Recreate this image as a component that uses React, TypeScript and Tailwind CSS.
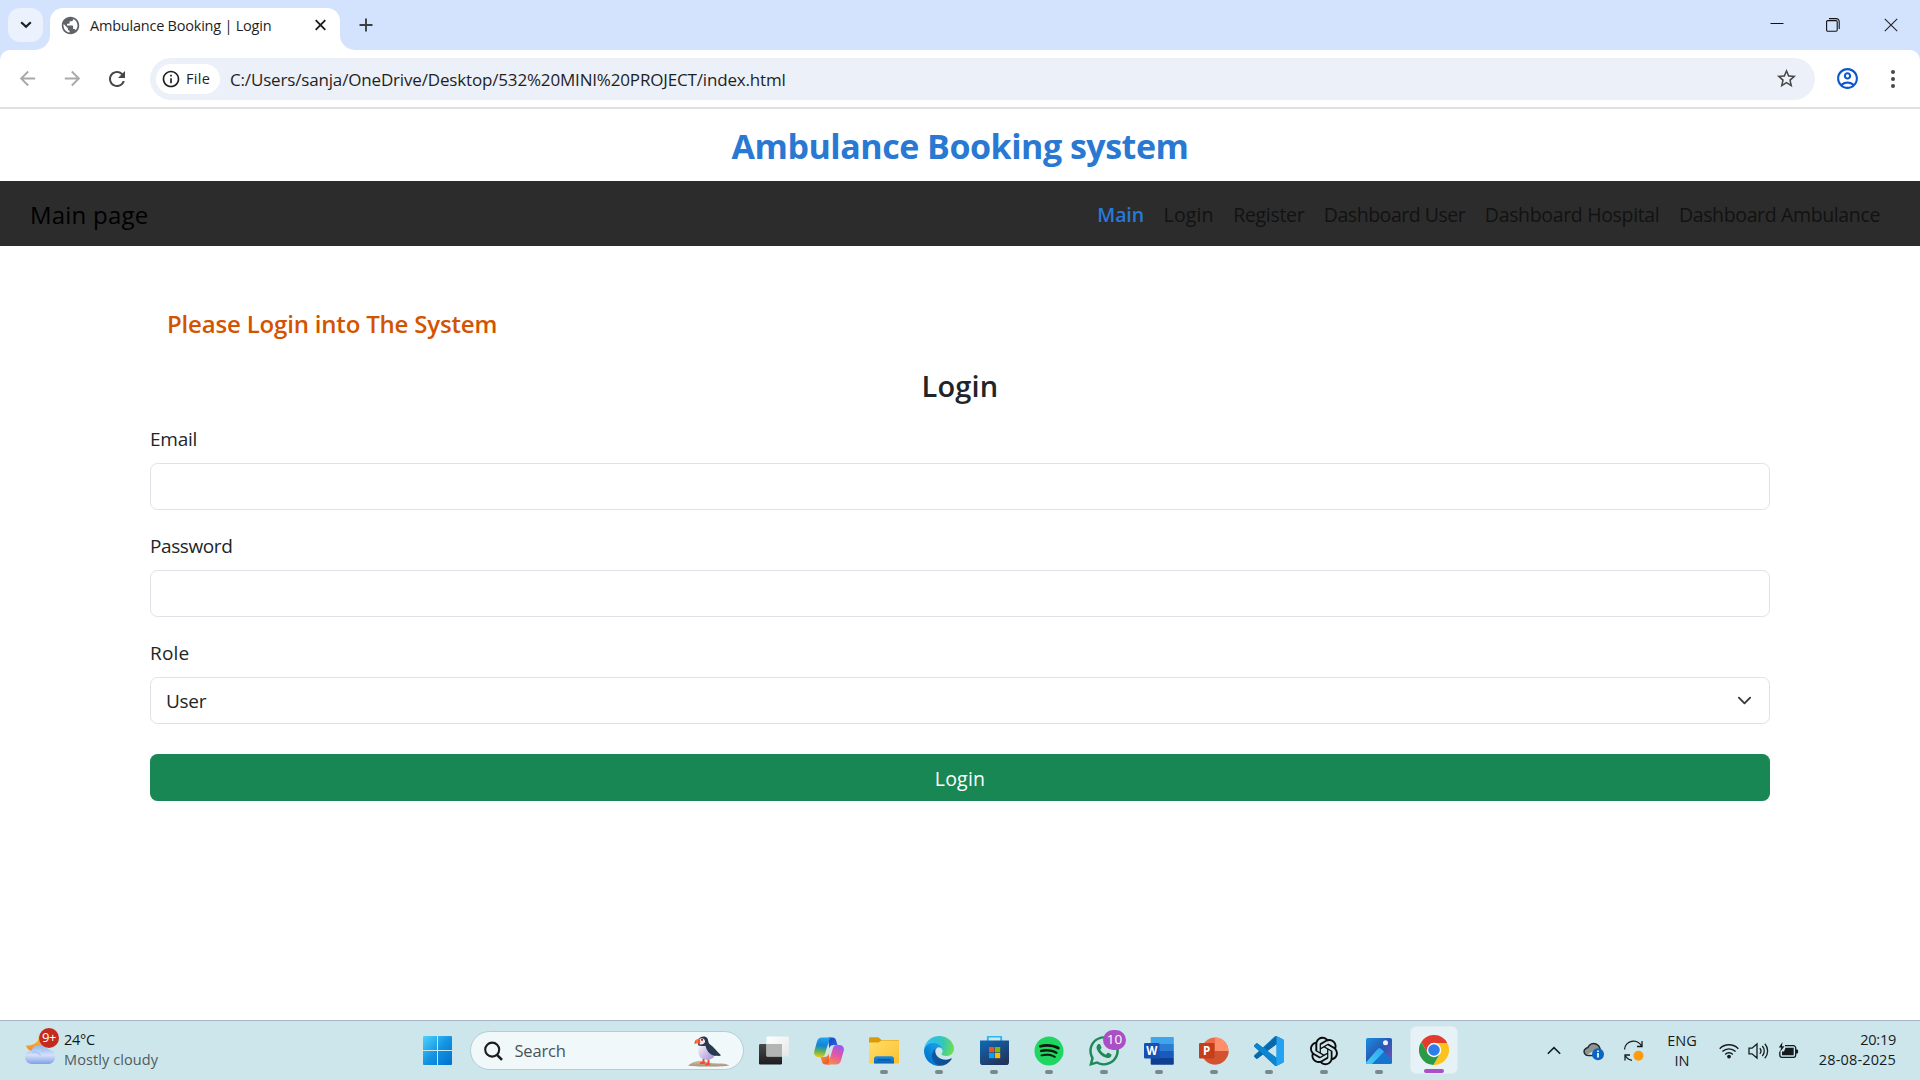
import React from "react";
import {
  MdPublic,
  MdArrowBack,
  MdArrowForward,
  MdRefresh,
  MdInfoOutline,
  MdStarBorder,
  MdOutlineAccountCircle,
} from "react-icons/md";
import { FaSpotify, FaWhatsapp } from "react-icons/fa";
import { RiOpenaiFill } from "react-icons/ri";

/* ---------- Browser frame ---------- */

function TabStrip() {
  return (
    <div className="flex h-[50px] items-start bg-[#d3e3fd] pl-2 pt-2">
      <button className="mr-[7px] flex h-[34px] w-[35px] items-center justify-center rounded-xl bg-[#ebf1fd]">
        <svg width="12" height="8" viewBox="0 0 12 8" fill="none" stroke="#1f1f1f" strokeWidth="2.2">
          <path d="M1.2 1.2 6 5.8l4.8-4.6" />
        </svg>
      </button>
      <div className="relative flex h-[42px] w-[290px] items-start rounded-t-[13px] bg-white pl-[10px] pr-[12px]">
        <svg className="absolute bottom-0 left-[-15px]" width="15" height="15" viewBox="0 0 15 15">
          <path d="M15 0v15H0A15 15 0 0 0 15 0z" fill="#fff" />
        </svg>
        <svg className="absolute bottom-0 right-[-15px]" width="15" height="15" viewBox="0 0 15 15">
          <path d="M0 0v15h15A15 15 0 0 1 0 0z" fill="#fff" />
        </svg>
        <div className="flex h-[35px] flex-1 items-center">
          <MdPublic className="-mt-px" size={21} color="#5f6368" />
          <span className="ml-[9px] text-[14.5px] tracking-[-0.221px] text-[#1f1f1f]">
            Ambulance Booking | Login
          </span>
          <svg className="ml-auto" width="15" height="15" viewBox="0 0 15 15" stroke="#1f1f1f" strokeWidth="1.9">
            <path d="m2.7 2.2 9.6 9.6M12.3 2.2 2.7 11.8" />
          </svg>
        </div>
      </div>
      <svg className="ml-[19px] mt-[10px]" width="14" height="14" viewBox="0 0 14 14" stroke="#3c4043" strokeWidth="1.9">
        <path d="M7 .5v13M.5 7h13" />
      </svg>
      <div className="ml-auto flex gap-[42px] pr-[22px] pt-[10px]">
        <svg width="14" height="14" viewBox="0 0 14 14" fill="none" stroke="#111" strokeWidth="1">
          <path d="M.5 5.5h13" />
        </svg>
        <svg width="14" height="14" viewBox="0 0 14 14" fill="none" stroke="#111" strokeWidth="1.1">
          <rect x=".6" y="2.6" width="10.6" height="10.6" rx="1.2" />
          <path d="M3 .6h7.200a3 3 0 0 1 3 3V11" />
        </svg>
        <svg className="ml-[2px]" width="14" height="14" viewBox="0 0 14 14" fill="none" stroke="#222" strokeWidth="1.1">
          <path d="m.8.8 12.400 12.400M13.200.8.8 13.200" />
        </svg>
      </div>
    </div>
  );
}

function Toolbar() {
  return (
    <div className="bg-[#d3e3fd]">
      <div className="flex h-[59px] items-center rounded-t-[10px] border-b-2 border-[#e1e1e1] bg-white pl-[16px] pr-[25px]">
        <MdArrowBack size={23} color="#a9a9a9" />
        <MdArrowForward className="ml-[22px]" size={23} color="#a9a9a9" />
        <MdRefresh className="ml-[21px]" size={24} color="#474747" />
        <div className="ml-[21px] flex h-[42px] flex-1 items-center rounded-full bg-[#ecf0f9] pl-[6px] pr-[17px]">
          <div className="flex h-[30px] w-[64px] items-center rounded-full bg-white pl-[5px]">
            <MdInfoOutline size={20} color="#1f1f1f" />
            <span className="ml-[5px] text-[14.5px] font-medium tracking-[0.3px] text-[#1f1f1f]">File</span>
          </div>
          <span className="ml-[10px] pt-[2px] text-[17px] tracking-[-0.165px] text-[#1f1f1f]">
            C:/Users/sanja/OneDrive/Desktop/532%20MINI%20PROJECT/index.html
          </span>
          <MdStarBorder className="ml-auto" size={23} color="#474747" />
        </div>
        <MdOutlineAccountCircle className="ml-[20px]" size={25} color="#0b57d0" />
        <div className="ml-[31px] flex flex-col gap-[3px]">
          <span className="h-1 w-1 rounded-full bg-[#474747]" />
          <span className="h-1 w-1 rounded-full bg-[#474747]" />
          <span className="h-1 w-1 rounded-full bg-[#474747]" />
        </div>
      </div>
    </div>
  );
}

/* ---------- Page ---------- */

function Navbar() {
  return (
    <nav className="flex h-[65px] items-center justify-between bg-[#2c2c2c] pl-[30px] pr-[40px]">
      <a className="pt-[2px] text-[24px] tracking-[0.214px] text-black">Main page</a>
      <div className="flex items-center gap-[19.5px] pt-[3px] text-[19.5px] text-[#121212]">
        <a className="font-semibold tracking-[-0.07px] text-[#2979d9]">Main</a>
        <a className="tracking-[0.145px]">Login</a>
        <a className="tracking-[-0.313px]">Register</a>
        <a className="tracking-[-0.474px]">Dashboard User</a>
        <a className="tracking-[-0.338px]">Dashboard Hospital</a>
        <a className="tracking-[-0.363px]">Dashboard Ambulance</a>
      </div>
    </nav>
  );
}

function LoginPage() {
  return (
    <main className="flex-1 bg-white text-[#212529]">
      <h1 className="flex h-[72px] items-center justify-center pt-[2px] text-[34px] font-bold tracking-[-0.49px] text-[#2979d3]">
        Ambulance Booking system
      </h1>
      <Navbar />
      <div className="mx-[150px] pt-[59px]">
        <p className="h-[38px] pl-[17px] text-[24px] font-semibold leading-[38px] tracking-[-0.18px] text-[#d35400]">
          Please Login into The System
        </p>
        <h2 className="mt-[25px] h-[36px] text-center text-[29px] font-semibold leading-[36px] tracking-[0.171px]">
          Login
        </h2>
        <form className="flex flex-col text-[19px]">
          <label className="mt-[20px] h-[30px] leading-[30px] tracking-[-0.25px]">Email</label>
          <input className="mt-[9px] h-[47px] rounded-[7.5px] border border-[#dee2e6]" />
          <label className="mt-[21px] h-[30px] leading-[30px] tracking-[-0.4px]">Password</label>
          <input type="password" className="mt-[9px] h-[47px] rounded-[7.5px] border border-[#dee2e6]" />
          <label className="mt-[21px] h-[30px] leading-[30px] tracking-[0.2px]">Role</label>
          <div className="mt-[9px] flex h-[47px] items-center justify-between rounded-[7.5px] border border-[#dee2e6] pl-[15px] pr-[17.5px] tracking-[-0.3px]">
            <span className="pt-[2px]">User</span>
            <svg width="15" height="15" viewBox="0 0 16 16" fill="none" stroke="#343a40" strokeWidth="2" strokeLinecap="round" strokeLinejoin="round">
              <path d="m2 5 6 6 6-6" />
            </svg>
          </div>
          <button type="button" className="mt-[30px] h-[47px] rounded-[7.5px] bg-[#198754] pt-[2px] text-[19.5px] tracking-[0.2px] text-white">
            Login
          </button>
        </form>
      </div>
    </main>
  );
}

/* ---------- Taskbar icons ---------- */

function WeatherIcon() {
  return (
    <svg width="36" height="40" viewBox="0 0 36 40">
      <defs>
        <linearGradient id="wx-cloud" x1="0" y1="0" x2="0" y2="1">
          <stop offset="0" stopColor="#8fb4f2" />
          <stop offset=".55" stopColor="#d3e0fa" />
          <stop offset="1" stopColor="#7f9fe6" />
        </linearGradient>
        <linearGradient id="wx-moon" x1="0" y1="0" x2="0" y2="1">
          <stop offset="0" stopColor="#fbc531" />
          <stop offset="1" stopColor="#f08a24" />
        </linearGradient>
      </defs>
      <path d="M13.500 7C15 12 10 18.500 1 17.500 3 25 15 26 20 18V8z" fill="url(#wx-moon)" />
      <path d="M7 36a6.800 6.800 0 0 1-.5-13.600A9.500 9.500 0 0 1 23.500 21.500 7.300 7.300 0 0 1 24 36z" fill="url(#wx-cloud)" />
      <path d="M7 24.500c4-1 7 .5 8.500 3M17 24c2-2.500 5-3 7-2" stroke="#a9c3f5" fill="none" strokeWidth="1.200" />
    </svg>
  );
}

function StartIcon() {
  return (
    <svg width="29" height="29" viewBox="0 0 29 29">
      <defs>
        <linearGradient id="win" x1="0" y1="0" x2="1" y2="1">
          <stop offset="0" stopColor="#4fd3fb" />
          <stop offset=".5" stopColor="#1494e2" />
          <stop offset="1" stopColor="#0070d0" />
        </linearGradient>
      </defs>
      <path d="M1 0h13v14H0V1a1 1 0 0 1 1-1zM15 0h13a1 1 0 0 1 1 1v13H15zM0 15h14v14H1a1 1 0 0 1-1-1zM15 15h14v13a1 1 0 0 1-1 1H15z" fill="url(#win)" />
    </svg>
  );
}

function PuffinIcon() {
  return (
    <svg width="42" height="32" viewBox="0 0 42 32">
      <defs>
        <linearGradient id="puf-belly" x1="0" y1="0" x2="1" y2="1">
          <stop offset="0" stopColor="#fbf4fb" />
          <stop offset="1" stopColor="#a48fd6" />
        </linearGradient>
        <linearGradient id="puf-rock" x1="0" y1="0" x2="0" y2="1">
          <stop offset="0" stopColor="#d3bfa3" />
          <stop offset="1" stopColor="#a2927f" />
        </linearGradient>
      </defs>
      <path d="M0 30.500c3-2.500 7-4.500 12-4.700 5-.3 8 2 13 2.400 6 .4 12-.4 16.500 2.300-8 1.300-33 1.500-41.500 0z" fill="url(#puf-rock)" />
      <path d="M12 10c-2 4-2.500 10 1 13 3.500 2.500 10 2.200 13-1 0-5-4-10-9-13z" fill="url(#puf-belly)" />
      <path d="M10.500 4.500C12 1.500 17 0 19.500 3.500c1 2 .5 4 2 5.500 4.500 3 7 7 11.500 11.300-1.500 1.200-4 .2-6 .7-6-1.500-8.500-6-9.500-10.300-2 .6-5.500.6-7.500-.4z" fill="#28384d" />
      <path d="M11 4.500c2-2 5.500-1.500 6 1.500.3 2.500-2.500 4-5.500 3.500z" fill="#f1e8ee" />
      <path d="M11 3.500c-3 .5-4.800 2.500-4.500 5.500 2-1 4-.8 5.300 0 .8-2 .5-4-.8-5.500z" fill="#f0502f" />
      <path d="M9.500 4.200c-.8 1.600-.7 3 .1 4.200" stroke="#f9b33c" strokeWidth="1" fill="none" />
      <circle cx="14" cy="4.800" r="1.100" fill="#c9302c" />
      <circle cx="14" cy="4.800" r=".5" fill="#111" />
      <path d="M15.500 24v3.500l-3.500.8M15.500 27.500l1.500 1M20.500 24.500v4l-3 1.500M20.500 28.500l1 1.500" stroke="#f0502f" strokeWidth="2" fill="none" />
    </svg>
  );
}

function TaskViewIcon() {
  return (
    <svg width="30" height="29" viewBox="0 0 30 29">
      <defs>
        <linearGradient id="tv-d" x1="0" y1="0" x2="0" y2="1">
          <stop offset="0" stopColor="#4a4a4a" />
          <stop offset="1" stopColor="#1d1d1d" />
        </linearGradient>
        <linearGradient id="tv-l" x1="0" y1="0" x2="1" y2="1">
          <stop offset="0" stopColor="#fff" />
          <stop offset="1" stopColor="#e4e6e7" />
        </linearGradient>
      </defs>
      <rect x="0" y="8" width="23" height="20.500" rx="1.200" fill="url(#tv-d)" />
      <rect x="7.500" y=".5" width="22.500" height="20" rx="1.200" fill="url(#tv-l)" />
      <path d="M7.500 8H23v12.500H7.500z" fill="#b3b5b5" />
    </svg>
  );
}

function CopilotIcon() {
  return (
    <svg width="30" height="28" viewBox="0 0 30 28">
      <defs>
        <linearGradient id="cp-a" x1=".4" y1="0" x2=".3" y2="1">
          <stop offset="0" stopColor="#1fa4ee" />
          <stop offset=".4" stopColor="#1683d8" />
          <stop offset=".7" stopColor="#58b35a" />
          <stop offset="1" stopColor="#f0c419" />
        </linearGradient>
        <linearGradient id="cp-b" x1=".7" y1="0" x2=".3" y2="1">
          <stop offset="0" stopColor="#9a5bf0" />
          <stop offset=".45" stopColor="#e055a8" />
          <stop offset="1" stopColor="#fb8a4a" />
        </linearGradient>
        <linearGradient id="cp-c" x1="0" y1="0" x2="1" y2="1">
          <stop offset="0" stopColor="#1b3fc4" />
          <stop offset="1" stopColor="#2371e8" />
        </linearGradient>
        <linearGradient id="cp-d" x1="0" y1="0" x2="1" y2="1">
          <stop offset="0" stopColor="#f6a623" />
          <stop offset="1" stopColor="#ee4338" />
        </linearGradient>
      </defs>
      <path d="M14 .5h4.500c2 0 3 1 3.500 2.800L23.500 8H20c-3 0-4 1-4.800 3.500z" fill="url(#cp-c)" />
      <path d="M16 27.500h-4.500c-2 0-3-1-3.500-2.800L6.500 20H10c3 0 4-1 4.800-3.500z" fill="url(#cp-d)" />
      <path d="M8 .5h10c-1.800.3-2.500 1.500-3 3.200L11 17c-.6 2-1.800 3-3.800 3H4.500C1.500 20-.5 17.800.2 14.500L3 4.500C3.700 2 5.500.5 8 .5z" fill="url(#cp-a)" />
      <path d="M22 27.500H12c1.800-.3 2.500-1.500 3-3.200L19 11c.6-2 1.800-3 3.800-3h2.700c3 0 5 2.200 4.300 5.500L27 23.500c-.7 2.500-2.500 4-5 4z" fill="url(#cp-b)" />
    </svg>
  );
}

function FolderIcon() {
  return (
    <svg width="30" height="27" viewBox="0 0 30 27">
      <defs>
        <linearGradient id="fd" x1="0" y1="0" x2="1" y2="1">
          <stop offset="0" stopColor="#ffdf6b" />
          <stop offset="1" stopColor="#fdbf2d" />
        </linearGradient>
        <linearGradient id="fd-b" x1="0" y1="0" x2="0" y2="1">
          <stop offset="0" stopColor="#1b8ee0" />
          <stop offset="1" stopColor="#0b63b8" />
        </linearGradient>
      </defs>
      <path d="M0 1.500A1.300 1.300 0 0 1 1.300.2h8L12.500 3H29a1 1 0 0 1 1 1v6H0z" fill="#dd9a08" />
      <path d="M0 5.500h9.500L12.500 3.500H29a1 1 0 0 1 1 1v21a1 1 0 0 1-1 1H1a1 1 0 0 1-1-1z" fill="url(#fd)" />
      <path d="M5 26.500V22a2.800 2.800 0 0 1 2.800-2.800h14.400A2.800 2.800 0 0 1 25 22v4.500z" fill="url(#fd-b)" />
      <path d="M8.500 22.800h13" stroke="#0a4c93" strokeWidth="1.200" />
    </svg>
  );
}

function EdgeIcon() {
  return (
    <svg width="30" height="30" viewBox="0 0 256 256">
      <defs>
        <linearGradient id="ed-a" x1="63" y1="177" x2="241" y2="177" gradientUnits="userSpaceOnUse">
          <stop offset="0" stopColor="#0c59a4" />
          <stop offset="1" stopColor="#114a8b" />
        </linearGradient>
        <linearGradient id="ed-b" x1="157" y1="104" x2="46" y2="225" gradientUnits="userSpaceOnUse">
          <stop offset="0" stopColor="#1b9de2" />
          <stop offset=".3" stopColor="#1595df" />
          <stop offset=".7" stopColor="#0680d7" />
          <stop offset="1" stopColor="#0078d4" />
        </linearGradient>
        <radialGradient id="ed-c" cx="30" cy="65" r="235" gradientUnits="userSpaceOnUse">
          <stop offset="0" stopColor="#35c1f1" />
          <stop offset=".3" stopColor="#2fbfe0" />
          <stop offset=".6" stopColor="#36c7b4" />
          <stop offset="1" stopColor="#6fe04f" />
        </radialGradient>
      </defs>
      <g transform="translate(-4.63 -4.92)">
        <path fill="url(#ed-a)" d="M235.680 195.460a93.730 93.730 0 0 1-10.540 4.710 101.870 101.870 0 0 1-35.900 6.460c-47.320 0-88.540-32.550-88.540-74.320A31.480 31.480 0 0 1 117.130 105c-42.800 1.800-53.800 46.400-53.800 72.530 0 73.880 68.090 81.370 82.760 81.370 7.910 0 19.840-2.300 27-4.560l1.310-.44A128.340 128.340 0 0 0 241 201.100a4 4 0 0 0-5.320-5.640z" />
        <path fill="url(#ed-b)" d="M110.340 246.340A79.200 79.200 0 0 1 87.600 225a80.720 80.720 0 0 1 29.530-120c3.120-1.470 8.450-4.130 15.540-4a32.350 32.350 0 0 1 25.690 13 31.880 31.880 0 0 1 6.360 18.660c0-.21 24.460-79.600-80-79.600-43.900 0-80 41.660-80 78.210a130.150 130.150 0 0 0 12.110 56 128 128 0 0 0 156.380 67.110 75.550 75.550 0 0 1-62.780-8z" />
        <path fill="url(#ed-c)" d="M156.940 153.750c-.81 1.050-3.300 2.500-3.300 5.660 0 2.610 1.700 5.120 4.720 7.230 14.380 10 41.490 8.680 41.560 8.680a59.560 59.560 0 0 0 30.270-8.350 61.380 61.380 0 0 0 30.430-52.880c.26-22.410-8-37.310-11.340-43.910C228.090 28.760 182.350 4.720 132.610 4.720a128 128 0 0 0-128 126.200c.48-36.540 36.800-66.050 80-66.050 3.500 0 23.460.34 42 10.070 16.340 8.580 24.900 18.940 30.850 29.210 6.180 10.670 7.280 24.150 7.280 29.520s-2.740 13.330-7.800 20.080z" />
      </g>
    </svg>
  );
}

function StoreIcon() {
  return (
    <svg width="29" height="29" viewBox="0 0 29 29">
      <defs>
        <linearGradient id="st" x1="0" y1="0" x2=".6" y2="1">
          <stop offset="0" stopColor="#0f6ab8" />
          <stop offset="1" stopColor="#22355f" />
        </linearGradient>
      </defs>
      <path d="M7.800 6V1.500a1 1 0 0 1 1-1h11.400a1 1 0 0 1 1 1V6" stroke="#2bb7f0" strokeWidth="1.900" fill="none" />
      <path d="M0 4.500h29v21.700a2.800 2.800 0 0 1-2.800 2.800H2.800A2.800 2.800 0 0 1 0 26.200z" fill="url(#st)" />
      <path d="M9 11h5.300v5.300H9z" fill="#f25022" />
      <path d="M14.900 11h5.300v5.300h-5.300z" fill="#7fba00" />
      <path d="M9 16.900h5.300v5.300H9z" fill="#00a4ef" />
      <path d="M14.900 16.900h5.300v5.300h-5.300z" fill="#ffb900" />
    </svg>
  );
}

function SpotifyIcon() {
  return (
    <div className="rounded-full bg-[radial-gradient(circle,#0d1a10_60%,transparent_61%)]">
      <FaSpotify size={30} color="#1ed760" />
    </div>
  );
}

function WhatsAppIcon() {
  return (
    <div className="relative">
      <FaWhatsapp size={34} color="#1f8a57" />
      <span className="absolute left-[16px] top-[-4px] flex h-[20px] w-[23px] items-center justify-center rounded-full bg-[#ab4fc4] text-[13.5px] text-white">
        10
      </span>
    </div>
  );
}

function WordIcon() {
  return (
    <svg width="30" height="28" viewBox="0 0 30 28">
      <path d="M7.500 0H29a.8.8 0 0 1 .8.800V7H6.700V.800A.8.8 0 0 1 7.500 0z" fill="#41a5ee" />
      <path d="M6.700 7h23.100v7H6.700z" fill="#2b7cd3" />
      <path d="M6.700 14h23.100v7H6.700z" fill="#185abd" />
      <path d="M6.700 21h23.100v5.700a1 1 0 0 1-1 1H7.700a1 1 0 0 1-1-1z" fill="#103f91" />
      <rect x="0" y="6" width="15.500" height="15.500" rx="1.200" fill="#1650b4" />
      <text x="7.700" y="18" textAnchor="middle" fontFamily="Open Sans, sans-serif" fontWeight="700" fontSize="11.500" fill="#fff">W</text>
    </svg>
  );
}

function PowerPointIcon() {
  return (
    <svg width="30" height="28" viewBox="0 0 30 28">
      <circle cx="16" cy="14" r="13.500" fill="#ed6c47" />
      <path d="M16 .5A13.500 13.500 0 0 1 29.500 14H16z" fill="#ff8f6b" />
      <path d="M2.500 14h27a13.500 13.500 0 0 1-27 0z" fill="#d35230" />
      <rect x="0" y="6" width="15.500" height="15.500" rx="1.200" fill="#c43e1c" />
      <text x="7.700" y="18" textAnchor="middle" fontFamily="Open Sans, sans-serif" fontWeight="700" fontSize="11.500" fill="#fff">P</text>
    </svg>
  );
}

function VsCodeIcon() {
  const body =
    "M70.912 99.317C72.487 99.931 74.283 99.891 75.873 99.126L96.461 89.220C98.624 88.179 100 85.989 100 83.587V16.413C100 14.011 98.624 11.822 96.461 10.781L75.873.874C73.786-.130 71.345.116 69.514 1.447C69.252 1.637 69.003 1.849 68.769 2.083L29.355 38.042L12.187 25.010C10.589 23.797 8.354 23.896 6.869 25.246L1.363 30.255C-.453 31.906-.455 34.763 1.359 36.417L16.247 50L1.359 63.583C-.455 65.237-.453 68.094 1.363 69.745L6.869 74.754C8.354 76.104 10.589 76.204 12.187 74.991L29.355 61.959L68.769 97.917C69.393 98.541 70.125 99.010 70.912 99.317ZM75.015 27.299L45.109 50L75.015 72.701V27.299Z";
  return (
    <svg width="30" height="30" viewBox="0 0 100 100">
      <defs>
        <clipPath id="vs-clip">
          <path d={body} clipRule="evenodd" />
        </clipPath>
      </defs>
      <g clipPath="url(#vs-clip)">
        <path d="M0 0h100v100H0z" fill="#0c7fc9" />
        <path d="M75 0 0 68l10 12L82 22z" fill="#0868ab" />
        <path d="M0 32 10 20 85 80 75 104z" fill="#0d84d0" />
        <path d="M75-2h27v104H75z" fill="#23a2f3" />
      </g>
    </svg>
  );
}

function PhotosIcon() {
  return (
    <svg width="26" height="26" viewBox="0 0 26 26">
      <defs>
        <linearGradient id="ph-a" x1="0" y1="0" x2="1" y2="1">
          <stop offset="0" stopColor="#1a8ee0" />
          <stop offset=".5" stopColor="#2758b4" />
          <stop offset="1" stopColor="#8a4bb8" />
        </linearGradient>
        <linearGradient id="ph-b" x1="0" y1="1" x2="1" y2="0">
          <stop offset="0" stopColor="#45cdf8" />
          <stop offset="1" stopColor="#2fa6ee" />
        </linearGradient>
        <clipPath id="ph-c">
          <rect width="26" height="26" rx="1.800" />
        </clipPath>
      </defs>
      <g clipPath="url(#ph-c)">
        <rect width="26" height="26" fill="url(#ph-a)" />
        <path d="M0 24.500 11.500 11.200a2.600 2.600 0 0 1 4 0L26 22v4H0z" fill="#1575cf" />
        <path d="M0 24.500 11.500 11.200a2.600 2.600 0 0 1 4 0l2.500 2.600L6 26H0z" fill="url(#ph-b)" />
        <circle cx="19.500" cy="4.800" r="2.500" fill="#f2f0fb" />
      </g>
    </svg>
  );
}

function ChromeIcon() {
  return (
    <svg width="30" height="30" viewBox="-15 -15 30 30">
      <path d="M-12.700-7.990A15 15 0 0 1 13.270-7H0V0L-6.060 3.500z" fill="#e33b2e" />
      <path d="M13.270-7A15 15 0 0 1-.57 14.990L6.060 3.500 0 0V-7z" fill="#fcc31e" />
      <path d="M-.57 14.990A15 15 0 0 1-12.700-7.990L-6.060 3.500 0 0l6.060 3.500z" fill="#2b9a47" />
      <circle r="7.200" fill="#fff" />
      <circle r="5.800" fill="#2f7de9" />
    </svg>
  );
}

/* ---------- Taskbar ---------- */

function TaskCell({ children, running }: { children: React.ReactNode; running?: boolean }) {
  return (
    <div className="relative flex h-[59px] w-[55px] items-center justify-center">
      {children}
      {running && <span className="absolute bottom-[6px] h-1 w-2 rounded-full bg-[#7a878b]" />}
    </div>
  );
}

function Tray() {
  return (
    <div className="ml-auto flex h-[59px] items-center text-[#141c1f]">
      <svg width="14" height="9" viewBox="0 0 14 9" fill="none" stroke="#141c1f" strokeWidth="1.600">
        <path d="m.8 7.700 6.200-6 6.200 6" />
      </svg>
      <svg className="ml-[22px]" width="22" height="20" viewBox="0 0 22 20">
        <path d="M5 14.500a4 4 0 0 1-3.500-5.700C2.500 7 4 6.600 5 6.400 6.500 3 10 1.600 13 3c2 .8 3.500 2.600 4 4.500l-4 7z" fill="#8f9495" stroke="#26292a" strokeWidth="1.500" />
        <path d="M4 13.500c3-1 6-4 12-5l-3 5.500z" fill="#d9dddd" />
        <circle cx="15" cy="13.200" r="6" fill="#0a66c2" />
        <path d="M15 12v4.500M15 9.500v1.500" stroke="#fff" strokeWidth="1.700" />
      </svg>
      <svg className="ml-[18px]" width="22" height="22" viewBox="0 0 22 22" fill="none" stroke="#141c1f" strokeWidth="1.300">
        <path d="M1.500 9.500A9 9 0 0 1 18.500 6M19 1v5.500h-5M2 20.500V15h5M2.500 16c1.500 2.500 4 4 6.500 4.300" />
        <circle cx="15.500" cy="15.700" r="5" fill="#ff9a0a" stroke="none" />
      </svg>
      <div className="ml-[20px] w-[34px] text-center text-[14.5px] leading-[20px]">
        <div>ENG</div>
        <div>IN</div>
      </div>
      <svg className="ml-[20px]" width="20" height="16" viewBox="0 0 20 16" fill="none" stroke="#141c1f" strokeWidth="1.400">
        <path d="M.7 5.700a13 13 0 0 1 18.600 0M3.400 8.600a9.300 9.300 0 0 1 13.200 0M6.200 11.400a5.300 5.300 0 0 1 7.600 0" />
        <circle cx="10" cy="13.600" r="1.900" fill="#141c1f" stroke="none" />
      </svg>
      <svg className="ml-[9px]" width="21" height="18" viewBox="0 0 21 18" fill="none" stroke="#141c1f" strokeWidth="1.300">
        <path d="M1 6.200h3L9 2v14l-5-4.200H1zM11.800 6.300a4 4 0 0 1 0 5.400M14.300 4a7.400 7.400 0 0 1 0 10M16.800 1.800a10.600 10.600 0 0 1 0 14.400" />
      </svg>
      <svg className="ml-[9px]" width="21" height="18" viewBox="0 0 21 18">
        <path d="M7 3.700h8.500a2.200 2.200 0 0 1 2.200 2.200v7.200a2.200 2.200 0 0 1-2.200 2.200H4A2.200 2.200 0 0 1 1.800 13.100V9.500" fill="none" stroke="#141c1f" strokeWidth="1.300" />
        <path d="M7.500 5.700h8.200v7.600H4V9.500h2z" fill="#141c1f" />
        <path d="M18 7.500h1.200a.9.900 0 0 1 .9.900v2.200a.9.900 0 0 1-.9.900H18z" fill="#141c1f" />
        <path d="M4.500 0 .8 5.600h2.400L2 10l4.500-5.800H4z" fill="#141c1f" />
      </svg>
      <div className="ml-[17px] w-[80px] pb-[2px] text-right text-[14.5px] leading-[20px]">
        <div className="tracking-[-0.245px]">20:19</div>
        <div className="tracking-[0.148px]">28-08-2025</div>
      </div>
    </div>
  );
}

function Taskbar() {
  return (
    <footer className="flex h-[60px] border-t border-[#a5b7c1] bg-[#cde6eb] pr-[24px]">
      <div className="flex w-[410px] items-center pl-[25px]">
        <div className="relative mb-[5px]">
          <WeatherIcon />
          <span className="absolute left-[14px] top-0 flex h-5 w-5 items-center justify-center rounded-full bg-[#c42b1c] text-[13px] tracking-[-0.5px] text-white">
            9+
          </span>
        </div>
        <div className="ml-[3px] mb-[2px] text-[14.5px] leading-[20px]">
          <div className="tracking-[-0.264px] text-[#101718]">24°C</div>
          <div className="tracking-[0.1px] text-[#4f5b5f]">Mostly cloudy</div>
        </div>
      </div>
      <TaskCell>
        <StartIcon />
      </TaskCell>
      <div className="ml-[4.5px] mr-[3px] mt-[10px] flex h-[39px] w-[274px] items-center rounded-full border border-[#b3cdd4] bg-[#f0f8fa] pl-[13px] pr-[13px]">
        <svg width="19" height="20" viewBox="0 0 19 20" fill="none" stroke="#1c1c1c" strokeWidth="2.100">
          <circle cx="8.200" cy="8.600" r="7" />
          <path d="m13 13.800 5 5" strokeWidth="2.600" />
        </svg>
        <span className="ml-[12px] pt-px text-[16.5px] tracking-[-0.18px] text-[#4b5356]">Search</span>
        <div className="ml-auto">
          <PuffinIcon />
        </div>
      </div>
      <TaskCell><TaskViewIcon /></TaskCell>
      <TaskCell><CopilotIcon /></TaskCell>
      <TaskCell running><FolderIcon /></TaskCell>
      <TaskCell running><EdgeIcon /></TaskCell>
      <TaskCell running><StoreIcon /></TaskCell>
      <TaskCell running><SpotifyIcon /></TaskCell>
      <TaskCell running><WhatsAppIcon /></TaskCell>
      <TaskCell running><WordIcon /></TaskCell>
      <TaskCell running><PowerPointIcon /></TaskCell>
      <TaskCell running><VsCodeIcon /></TaskCell>
      <TaskCell running><RiOpenaiFill size={34} color="#0b0b0b" /></TaskCell>
      <TaskCell running><PhotosIcon /></TaskCell>
      <div className="relative ml-[3.5px] mt-[5px] flex h-[48px] w-[48px] items-center justify-center rounded-md border border-[#dcebf0] bg-[#e6f2f6]">
        <ChromeIcon />
        <span className="absolute bottom-0 h-1 w-5 rounded-full bg-[#ab4fc4]" />
      </div>
      <Tray />
    </footer>
  );
}

export default function App() {
  return (
    <div className="flex h-[1080px] w-[1920px] flex-col overflow-hidden bg-white font-['Open_Sans','Noto_Sans',sans-serif]">
      <TabStrip />
      <Toolbar />
      <LoginPage />
      <Taskbar />
    </div>
  );
}
